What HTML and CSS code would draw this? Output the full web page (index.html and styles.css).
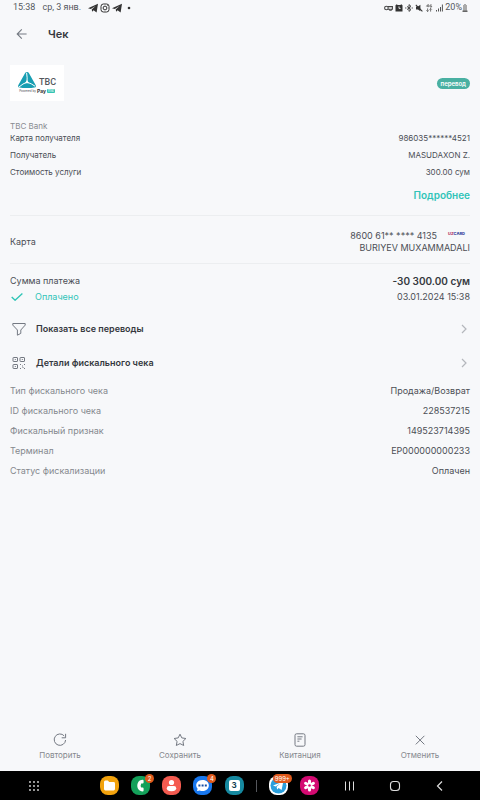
FILE: index.html
```html
<!DOCTYPE html>
<html lang="ru">
<head>
<meta charset="utf-8">
<meta name="viewport" content="width=device-width, initial-scale=1">
<title>Чек</title>
<link rel="stylesheet" href="styles.css">
</head>
<body>
<div class="status">
  <div class="status-left">
    <time>15:38</time><span>ср, 3 янв.</span>
    <span class="status-apps">
      <svg width="10" height="10" viewBox="0 0 10 10"><path fill="#333" d="M0 5.3 10 .7 8.6 9.4 5.6 7.3 4.2 8.8 3.7 6.4 7.6 3 2.8 6.1z"/></svg>
      <svg width="10" height="10" viewBox="0 0 10 10" fill="none" stroke="#333"><rect x="1" y="1" width="8" height="8" rx="2.4"/><circle cx="5" cy="5" r="1.9"/><path d="M7.2 2.4h.6"/></svg>
      <svg width="10" height="10" viewBox="0 0 10 10"><path fill="#333" d="M0 5.3 10 .7 8.6 9.4 5.6 7.3 4.2 8.8 3.7 6.4 7.6 3 2.8 6.1z"/></svg>
      <svg width="10" height="10" viewBox="0 0 10 10"><circle cx="5" cy="5" r="1.3" fill="#333"/></svg>
    </span>
  </div>
  <div class="status-right">
    <svg width="9" height="8" viewBox="0 0 9 8" fill="none" stroke="#444" stroke-width="1.1"><circle cx="2.4" cy="4" r="1.8"/><path d="M4 2.6h4.4v2.6H7.2v1H5.8v-1H4"/></svg>
    <svg width="8" height="8" viewBox="0 0 8 8"><path fill="#333" d="M.5 1.2 1.8.3l.8.7h2.8l.8-.7 1.3.9v6.3h-7z"/><path d="M4 2.4v2h1.6" fill="none" stroke="#f7f8fa" stroke-width=".9"/></svg>
    <svg width="8" height="8" viewBox="0 0 8 8" fill="none" stroke="#444" stroke-width="1"><path d="M2 2.4 6 5.6 4 7.4V.6l2 1.8-4 3.2M.8 3.4v1.2M7.2 3.4v1.2"/></svg>
    <svg width="8" height="8" viewBox="0 0 8 8"><path fill="#333" d="M1 2.6h2L5.4.8v6.4L3 5.6H1z"/><path d="M.8.8 7.4 7.4" stroke="#333" stroke-width="1.1"/></svg>
    <svg width="8" height="8" viewBox="0 0 8 8" fill="none" stroke="#666" stroke-width=".9"><path d="M3.2.4 1.5 2.2h2M3.2.4v2.8M6.8 1H5v2h1.6V2M2.6 4.4v3.2M1.4 6.4l1.2 1.2 1-1.2M5.6 7.6V4.4M4.6 5.6l1-1.2 1.2 1.2"/></svg>
    <svg width="8" height="8" viewBox="0 0 8 8" stroke="#555" stroke-width="1"><path d="M1.5 7.5V6M3.5 7.5v-3M5.5 7.5V3M7.4 7.5v-7"/></svg>
    <span class="battery">20%<svg width="6" height="8" viewBox="0 0 6 8"><path fill="#aaa" d="M2 0h2v1h1v6H1V1h1z"/><path fill="#666" d="M.5 6.5h5V8h-5z"/></svg></span>
  </div>
</div>

<header class="header">
  <button class="back" aria-label="Назад"><svg width="12" height="12" viewBox="0 0 12 12" fill="none" stroke="#747982" stroke-width="1.1"><path d="M10.6 6H1.3M5.8 1.3 1.2 6l4.6 4.7"/></svg></button>
  <h1>Чек</h1>
</header>

<main class="receipt">
  <section class="merchant">
    <div class="logo">
      <div class="logo-main">
        <svg width="18" height="16" viewBox="0 0 18 16"><path fill="#189eb2" d="M9 0Q10.4 0 11 1.2L17.6 13q.9 2.2-1.2 2.6Q9 16.8 1.6 15.6-.5 15.2.4 13L7 1.2Q7.6 0 9 0z"/><path d="M8.6.8Q9.5 6 9 10.2 5 11.4 1 15M9 10.2q4.5 1.3 8 4" fill="none" stroke="#fff" stroke-width="1"/><path fill="#fff" d="m9 7.9 2 3.3H7z"/></svg>
        <span>TBC</span>
      </div>
      <div class="logo-by"><span>Powered by</span><b>Pay</b><i>me</i></div>
    </div>
    <span class="badge">перевод</span>
  </section>

  <section class="service">
    <p class="bank">TBC Bank</p>
    <dl class="rows rows-small">
      <div><dt>Карта получателя</dt><dd>986035******4521</dd></div>
      <div><dt>Получатель</dt><dd>MASUDAXON Z.</dd></div>
      <div><dt>Стоимость услуги</dt><dd>300.00 сум</dd></div>
    </dl>
    <a class="more" href="#details">Подробнее</a>
  </section>

  <section class="card">
    <span>Карта</span>
    <div class="card-info">
      <div class="card-number"><span>8600 61** **** 4135</span><span class="uzcard"><em>UZ</em>CARD</span></div>
      <div>BURIYEV MUXAMMADALI</div>
    </div>
  </section>

  <section class="payment">
    <div class="pay-row"><span>Сумма платежа</span><strong>-30 300.00 сум</strong></div>
    <div class="pay-row"><span class="paid"><svg width="12" height="8" viewBox="0 0 12 8" fill="none" stroke="#2fc5b6" stroke-width="1.4"><path d="m.7 4 3.4 3.2L11.4.6"/></svg>Оплачено</span><time>03.01.2024 15:38</time></div>
  </section>

  <nav class="links">
    <button class="link">
      <svg width="14" height="14" viewBox="0 0 14 14" fill="none" stroke="#747982" stroke-width="1"><path d="M.8 1.5h12.4v1.6L8.8 8v3.4l-3.4 1.8V8L.8 3.1z" stroke-linejoin="round"/></svg>
      <span>Показать все переводы</span>
      <svg class="chevron" width="6" height="10" viewBox="0 0 6 10"><path d="m1 1 4 4-4 4"/></svg>
    </button>
    <button class="link">
      <svg width="14" height="14" viewBox="0 0 14 14" fill="none" stroke="#747982" stroke-width="1"><rect x="1" y="1.5" width="4.5" height="4" rx=".5"/><rect x="8" y="1.5" width="4.5" height="4" rx=".5"/><rect x="1" y="8.5" width="4.5" height="4" rx=".5"/><path d="M2.8 3.5h1M9.8 3.5h1M2.8 10.5h1M8 8.5h1M12 8.5h1M10 10h1M8 12.5h1M12 12.5h1M10.5 11.5h1"/></svg>
      <span>Детали фискального чека</span>
      <svg class="chevron" width="6" height="10" viewBox="0 0 6 10"><path d="m1 1 4 4-4 4"/></svg>
    </button>
  </nav>

  <dl class="rows rows-fiscal" id="details">
    <div><dt>Тип фискального чека</dt><dd>Продажа/Возврат</dd></div>
    <div><dt>ID фискального чека</dt><dd>228537215</dd></div>
    <div><dt>Фискальный признак</dt><dd>149523714395</dd></div>
    <div><dt>Терминал</dt><dd>EP000000000233</dd></div>
    <div><dt>Статус фискализации</dt><dd>Оплачен</dd></div>
  </dl>
</main>

<footer class="actions">
  <button><svg width="14" height="14" viewBox="0 0 14 14"><path d="M11.2 2.9A5.7 5.7 0 1 0 12.6 7M12.6.8v4H8.7"/></svg>Повторить</button>
  <button><svg width="14" height="14" viewBox="0 0 14 14"><path d="m7 1.2 1.8 3.7 4.1.6-3 2.9.8 4.1L7 10.6l-3.7 1.9.8-4.1-3-2.9 4.1-.6z"/></svg>Сохранить</button>
  <button><svg width="14" height="14" viewBox="0 0 14 14"><rect x="2" y=".8" width="10" height="12.4" rx="1.6"/><path d="M4.4 3.8h5.2M4.4 6h4.2M4.4 8.2h2"/></svg>Квитанция</button>
  <button><svg width="14" height="14" viewBox="0 0 14 14"><path d="m2.8 2.8 8.6 8.6M11.4 2.8l-8.6 8.6"/></svg>Отменить</button>
</footer>

<nav class="taskbar">
  <button class="all-apps" aria-label="Приложения"><svg width="10" height="10" viewBox="0 0 10 10" fill="#ddd"><circle cx="1" cy="1" r=".9"/><circle cx="5" cy="1" r=".9"/><circle cx="9" cy="1" r=".9"/><circle cx="1" cy="5" r=".9"/><circle cx="5" cy="5" r=".9"/><circle cx="9" cy="5" r=".9"/><circle cx="1" cy="9" r=".9"/><circle cx="5" cy="9" r=".9"/><circle cx="9" cy="9" r=".9"/></svg></button>
  <div class="dock">
    <button class="app files" aria-label="Файлы"><svg width="19" height="19" viewBox="0 0 19 19" fill="#fff"><path d="M4 6q0-1.5 1.4-1.5h2.4L9.2 6h4.4Q15 6 15 7.4V13q0 1.4-1.4 1.4H5.4Q4 14.4 4 13z"/></svg></button>
    <button class="app phone" aria-label="Телефон"><svg width="19" height="19" viewBox="0 0 19 19"><path fill="#fff" d="M11.6 3.8q1 0 1 1v1.8q0 1-1 1h-1.4q-1 2 0 4h1.4q1 0 1 1v1.8q0 1-1 1C4.600 15.400 4.600 3.800 11.600 3.800z"/></svg><span class="count">2</span></button>
    <button class="app contacts" aria-label="Контакты"><svg width="19" height="19" viewBox="0 0 19 19" fill="#fff"><circle cx="9.5" cy="6.5" r="2.6"/><path d="M4.8 12.2q0-2.2 2.2-2.2h5q2.2 0 2.2 2.2 0 3-4.700 3t-4.700-3z"/></svg></button>
    <button class="app messages" aria-label="Сообщения"><svg width="19" height="19" viewBox="0 0 19 19"><path fill="#fff" d="M9.5 4c8.5 0 8.5 11 0 11q-1.5 0-2.8-.6L4 15l.6-2.3C1.4 9 4 4 9.5 4z"/><path fill="#174ea6" d="M5.400 8.600h2v1.800h-2zM8.600 8.600h2v1.800h-2zM11.800 8.600h2v1.800h-2z"/></svg><span class="count">4</span></button>
    <button class="app calendar" aria-label="Календарь"><span>3</span></button>
    <span class="separator"></span>
    <button class="app telegram" aria-label="Telegram"><svg width="19" height="19" viewBox="0 0 19 19"><circle cx="9.5" cy="9.5" r="8" fill="#2a9fdc"/><path fill="#fff" d="M4 9.6 14.3 5.4 12.6 14l-3-2.1-1.5 1.5-.5-2.6 4-3.6-5 3.2z"/></svg><span class="count">999+</span></button>
    <button class="app gallery" aria-label="Галерея"><svg width="19" height="19" viewBox="0 0 19 19" stroke="#fff" stroke-width="3" stroke-linecap="round"><path d="M9.5 5v9M5.6 7.3l7.8 4.5M5.6 11.8l7.8-4.5"/><circle cx="9.5" cy="9.5" r="1.3" fill="#d40a72" stroke="none"/></svg></button>
  </div>
  <div class="system">
    <button aria-label="Недавние"><svg width="12" height="12" viewBox="0 0 12 12" stroke="#ddd" stroke-width="1"><path d="M2.500 1.500v9M6.500 1.500v9M10.500 1.500v9"/></svg></button>
    <button aria-label="Главный экран"><svg width="12" height="12" viewBox="0 0 12 12" fill="none" stroke="#ddd" stroke-width="1.1"><rect x="1.5" y="1.5" width="9" height="9" rx="3"/></svg></button>
    <button aria-label="Назад"><svg width="12" height="12" viewBox="0 0 12 12" fill="none" stroke="#ddd" stroke-width="1.2"><path d="M8 1.5 3.5 6 8 10.5"/></svg></button>
  </div>
</nav>
</body>
</html>
```
FILE: styles.css
```css
* {
  box-sizing: border-box;
}

body {
  margin: 0;
  min-height: 100vh;
  display: flex;
  flex-direction: column;
  background: #f7f8fa;
  color: #4b4e55;
  font: 9px/12px Inter, "Liberation Sans", sans-serif;
}

button {
  margin: 0;
  padding: 0;
  border: 0;
  background: none;
  color: inherit;
  font: inherit;
}

svg {
  display: block;
  flex: none;
}

h1, p, dl, dd {
  margin: 0;
}

.status {
  display: flex;
  justify-content: space-between;
  height: 15px;
  padding: 0 12px 0 13px;
  color: #55585e;
  font: 9px/15px Roboto, sans-serif;
}

.status-left, .status-right, .status-apps, .battery {
  display: flex;
  align-items: center;
}

.status-left {
  gap: 7px;
}

.status-apps {
  gap: 2px;
}

.status-right {
  gap: 2px;
}

.header {
  display: flex;
  align-items: center;
  gap: 20px;
  height: 38px;
  padding: 0 16px;
}

.header h1 {
  color: #35383e;
  font-size: 11px;
  font-weight: 600;
  line-height: 14px;
}

.receipt {
  flex: 1;
  padding: 12px 10px;
}

.merchant {
  display: flex;
  align-items: center;
  justify-content: space-between;
}

.logo {
  display: flex;
  flex-direction: column;
  align-items: center;
  width: 54px;
  height: 36px;
  padding-top: 7px;
  background: #fff;
}

.logo-main {
  display: flex;
  align-items: center;
  gap: 3px;
  color: #54575c;
  font: 500 9px/12px Roboto, sans-serif;
}

.logo-main span {
  padding-top: 4px;
}

.logo-by {
  display: flex;
  align-items: center;
  gap: 1px;
  font-size: 3px;
  line-height: 6px;
}

.logo-by b {
  color: #333;
  font-size: 5px;
}

.logo-by i {
  padding: 0 1px;
  border-radius: 1px;
  background: #35c4b5;
  color: #fff;
  font-size: 4px;
  font-style: normal;
  line-height: 4px;
}

.badge {
  padding: 0 4px;
  border-radius: 6px;
  background: #49b0a2;
  color: #fff;
  font-size: 6px;
  font-weight: 600;
  line-height: 11px;
}

.service {
  display: flex;
  flex-direction: column;
  padding: 20px 0 14px;
  border-bottom: 1px solid #eceef0;
}

.bank {
  color: #888b91;
  font-size: 8px;
  line-height: 11px;
}

.rows div {
  display: flex;
  align-items: center;
  justify-content: space-between;
}

.rows-small {
  display: grid;
  gap: 5px;
  font-size: 8px;
}

.more {
  align-self: flex-end;
  margin-top: 11px;
  color: #30c4b8;
  font-size: 10px;
  font-weight: 600;
  text-decoration: none;
}

.card {
  display: flex;
  align-items: center;
  justify-content: space-between;
  padding: 14px 0 9px;
  border-bottom: 1px solid #eceef0;
}

.card-info {
  text-align: right;
}

.card-number {
  display: flex;
  justify-content: flex-end;
  gap: 11px;
  padding-right: 5px;
}

.uzcard {
  color: #34459c;
  font-size: 4px;
  font-weight: 800;
  line-height: 8px;
}

.uzcard em {
  color: #b23a68;
  font-style: normal;
}

.payment {
  display: grid;
  gap: 4px;
  padding-top: 11px;
}

.pay-row {
  display: flex;
  justify-content: space-between;
}

.pay-row strong {
  color: #35383e;
  font-size: 10px;
  font-weight: 600;
}

.paid {
  display: flex;
  align-items: center;
  gap: 12px;
  padding-left: 1px;
  color: #30c4b8;
}

.links {
  display: grid;
  padding: 9px 3px 0 2px;
}

.link {
  display: flex;
  align-items: center;
  gap: 10px;
  height: 34px;
  color: #35383e;
  font-weight: 600;
}

.chevron {
  margin-left: auto;
  fill: none;
  stroke: #b4b7bc;
  stroke-width: 1.2;
}

.rows-fiscal {
  display: grid;
  gap: 8px;
  padding-top: 5px;
}

.rows-fiscal dt {
  color: #85888e;
}

.actions {
  display: grid;
  grid-template-columns: repeat(4, 1fr);
  padding: 0 0 11px;
}

.actions button {
  display: flex;
  flex-direction: column;
  align-items: center;
  gap: 3px;
  color: #85888e;
  font-size: 8px;
  line-height: 10px;
}

.actions svg {
  fill: none;
  stroke: #747982;
  stroke-width: 1;
}

.taskbar {
  display: grid;
  grid-template-columns: 29fr 71fr 219fr 24fr 103fr 34fr;
  align-items: center;
  height: 29px;
  background: #000;
}

.all-apps {
  grid-column: 2;
  justify-self: start;
}

.dock, .system {
  display: flex;
  align-items: center;
  justify-content: space-between;
}

.dock {
  grid-column: 3;
}

.system {
  grid-column: 5;
}

.app {
  position: relative;
  width: 19px;
  height: 19px;
  border-radius: 8px;
}

.files { background: #f2a20d; }
.phone { background: #14a05a; }
.contacts { background: #f45b50; }
.messages { background: #1877ee; }
.calendar { background: #1689a0; }
.telegram { background: #fff; }
.gallery { background: #d40a72; }

.calendar span {
  display: block;
  margin: 0 auto;
  width: 11px;
  border-radius: 2px;
  background: #fff;
  color: #123f54;
  font-size: 8px;
  font-weight: 700;
  line-height: 11px;
}

.count {
  position: absolute;
  top: -2px;
  right: -4px;
  min-width: 9px;
  padding: 0 2px;
  border-radius: 5px;
  background: #e05a1c;
  color: #fff;
  font-size: 6px;
  line-height: 9px;
}

.separator {
  width: 1px;
  height: 12px;
  background: #55575c;
}
```
